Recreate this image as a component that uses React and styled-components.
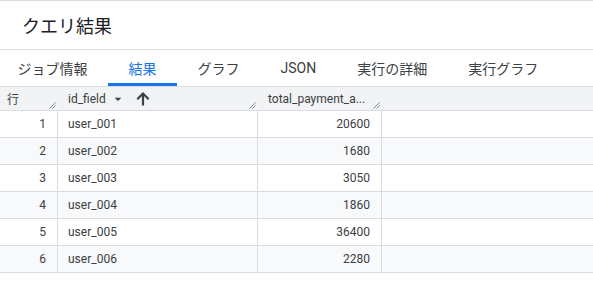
import styled, { createGlobalStyle } from 'styled-components';

const GlobalStyle = createGlobalStyle`
  body {
    margin: 0;
    background: #fff;
    font-family: Roboto, "Noto Sans CJK JP", sans-serif;
    color: #3c4043;
  }
`;

const tabs = ['ジョブ情報', '結果', 'グラフ', 'JSON', '実行の詳細', '実行グラフ'];

const rows = [
  { id: 'user_001', total: 20600 },
  { id: 'user_002', total: 1680 },
  { id: 'user_003', total: 3050 },
  { id: 'user_004', total: 1860 },
  { id: 'user_005', total: 36400 },
  { id: 'user_006', total: 2280 },
];

const ResizeGrip = () => (
  <Grip width="7" height="7" viewBox="0 0 7 7">
    <path d="M0.5 6.5L6.5 0.5M3.5 6.5L6.5 3.5" stroke="#80868b" strokeWidth="1" fill="none" />
  </Grip>
);

const App = () => {
  const active = 1;

  return (
    <Page>
      <GlobalStyle />
      <TitleBar>
        <Title>クエリ結果</Title>
      </TitleBar>

      <TabBar>
        {tabs.map((t, i) => (
          <Tab key={t} $active={i === active}>
            {t}
          </Tab>
        ))}
      </TabBar>

      <Table>
        <HeadCell>
          行
          <ResizeGrip />
        </HeadCell>
        <HeadCell>
          id_field
          <DropIcon width="16" height="16" viewBox="0 0 24 24">
            <path d="M7 10l5 5 5-5z" fill="#3c4043" />
          </DropIcon>
          <SortIcon width="16" height="16" viewBox="0 0 16 16">
            <path
              d="M8 14.5V2.5M2.3 8.2L8 2.5l5.7 5.7"
              stroke="#3c4043"
              strokeWidth="2.2"
              fill="none"
            />
          </SortIcon>
          <ResizeGrip />
        </HeadCell>
        <HeadCell>
          total_payment_a...
          <ResizeGrip />
        </HeadCell>
        <HeadCell />

        {rows.map((r, i) => (
          <Row key={r.id} $striped={i % 2 === 1}>
            <Cell $align="right">{i + 1}</Cell>
            <Cell>{r.id}</Cell>
            <Cell $align="right">{r.total}</Cell>
            <Cell $last />
          </Row>
        ))}
      </Table>
    </Page>
  );
};

const Page = styled.div`
  width: 593px;
  height: 304px;
  overflow: hidden;
  background: #fff;
`;

const TitleBar = styled.div`
  height: 48px;
  display: flex;
  align-items: center;
  padding-left: 22px;
  border-top: 1px solid #dadce0;
  border-bottom: 1px solid #dadce0;
`;

const Title = styled.h1`
  margin: 0;
  font-size: 18px;
  font-weight: 400;
  color: #202124;
`;

const TabBar = styled.div`
  display: flex;
  height: 36px;
  margin-left: -3px;
`;

const Tab = styled.div`
  position: relative;
  display: flex;
  align-items: center;
  padding: 0 20.5px;
  font-size: 14px;
  color: ${p => (p.$active ? '#1a73e8' : '#3c4043')};

  &::after {
    content: '';
    position: absolute;
    left: 0;
    right: 0;
    bottom: 0;
    height: 3px;
    background: ${p => (p.$active ? '#1a73e8' : 'transparent')};
  }
`;

const Table = styled.div`
  display: grid;
  grid-template-columns: 58px 200px 124px 1fr;
  border-top: 1px solid #dadce0;
`;

const HeadCell = styled.div`
  position: relative;
  display: flex;
  align-items: center;
  height: 23px;
  padding: 0 10px 0 7px;
  background: #f1f3f4;
  border-bottom: 1px solid #dadce0;
  font-size: 12px;
  color: #3c4043;

  & + & {
    padding-left: 10px;
  }
`;

const Grip = styled.svg`
  position: absolute;
  right: 2px;
  bottom: 1px;
`;

const DropIcon = styled.svg`
  margin-left: 4px;
`;

const SortIcon = styled.svg`
  margin-left: 9px;
`;

const Row = styled.div`
  display: contents;

  & > div {
    background: ${p => (p.$striped ? '#f8f9fa' : '#fff')};
  }
`;

const Cell = styled.div`
  display: flex;
  align-items: center;
  justify-content: ${p => (p.$align === 'right' ? 'flex-end' : 'flex-start')};
  height: 26px;
  padding: 0 11px 0 10px;
  border-bottom: 1px solid #dadce0;
  border-right: ${p => (p.$last ? 'none' : '1px solid #dadce0')};
  font-size: 12px;
  color: #3c4043;
`;

export default App;
